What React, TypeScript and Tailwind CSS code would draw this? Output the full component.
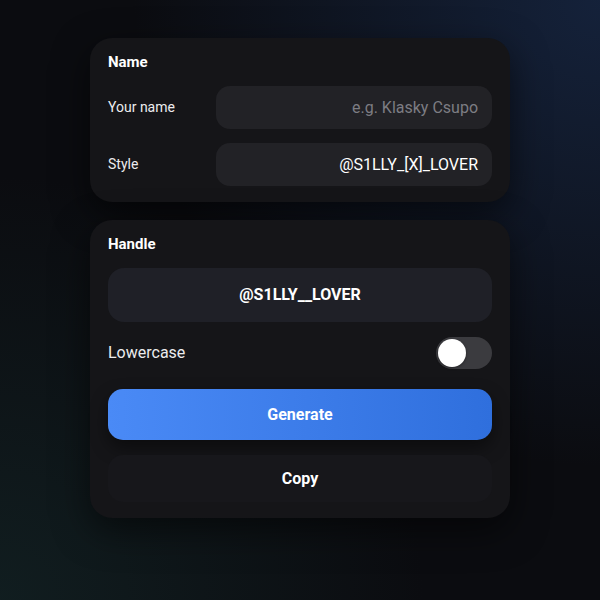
import React from "react";

export default function App() {
  return (
    <div
      className="relative w-[600px] h-[600px] overflow-hidden bg-[#0b0c10] flex flex-col items-center pt-[38px] gap-[18px]"
      style={{ fontFamily: "Roboto, 'Noto Sans', sans-serif" }}
    >
      <div className="pointer-events-none absolute inset-0 bg-[radial-gradient(ellipse_at_top_right,rgba(30,55,100,0.5),transparent_55%)]" />
      <div className="pointer-events-none absolute inset-0 bg-[radial-gradient(ellipse_at_bottom_left,rgba(25,55,55,0.4),transparent_50%)]" />

      <div className="relative w-[420px] rounded-[22px] bg-[#151518] px-[18px] pt-[14px] pb-4 shadow-[0_12px_36px_rgba(0,0,0,0.55)]">
        <div className="text-[15px] leading-5 font-bold text-white">Name</div>
        <div className="mt-[14px] flex flex-col gap-[14px]">
          <div className="flex items-center">
            <div className="w-[108px] text-[14px] text-[#ececee]">Your name</div>
            <div className="flex-1 h-[43px] rounded-[14px] bg-[#222226] flex items-center justify-end pr-[14px] text-[16px] text-[#7d7d83]">
              e.g. Klasky Csupo
            </div>
          </div>
          <div className="flex items-center">
            <div className="w-[108px] text-[14px] text-[#ececee]">Style</div>
            <div className="flex-1 h-[43px] rounded-[14px] bg-[#222226] flex items-center justify-end pr-[14px] text-[16px] text-white">
              @S1LLY_[X]_LOVER
            </div>
          </div>
        </div>
      </div>

      <div className="relative w-[420px] rounded-[22px] bg-[#151518] px-[18px] pt-[14px] pb-4 shadow-[0_12px_36px_rgba(0,0,0,0.55)]">
        <div className="text-[15px] leading-5 font-bold text-white">Handle</div>
        <div className="mt-[14px] h-[54px] rounded-[16px] bg-[#1f2027] flex items-center justify-center text-[16px] font-bold text-white">
          @S1LLY__LOVER
        </div>
        <div className="mt-[15px] flex items-center justify-between h-8">
          <div className="text-[16px] text-[#ececee]">Lowercase</div>
          <div className="w-[56px] h-8 rounded-full bg-[#3b3b3f] flex items-center px-[2px]">
            <div className="w-[28px] h-[28px] rounded-full bg-white shadow-[0_1px_3px_rgba(0,0,0,0.4)]" />
          </div>
        </div>
        <div className="mt-5 h-[51px] rounded-[15px] bg-gradient-to-r from-[#4a8af6] to-[#2f6fdd] flex items-center justify-center text-[16px] font-bold text-white shadow-[0_8px_18px_rgba(0,0,0,0.45)]">
          Generate
        </div>
        <div className="mt-[15px] h-[47px] rounded-[15px] bg-[#17171b] flex items-center justify-center text-[16px] font-bold text-white">
          Copy
        </div>
      </div>
    </div>
  );
}
